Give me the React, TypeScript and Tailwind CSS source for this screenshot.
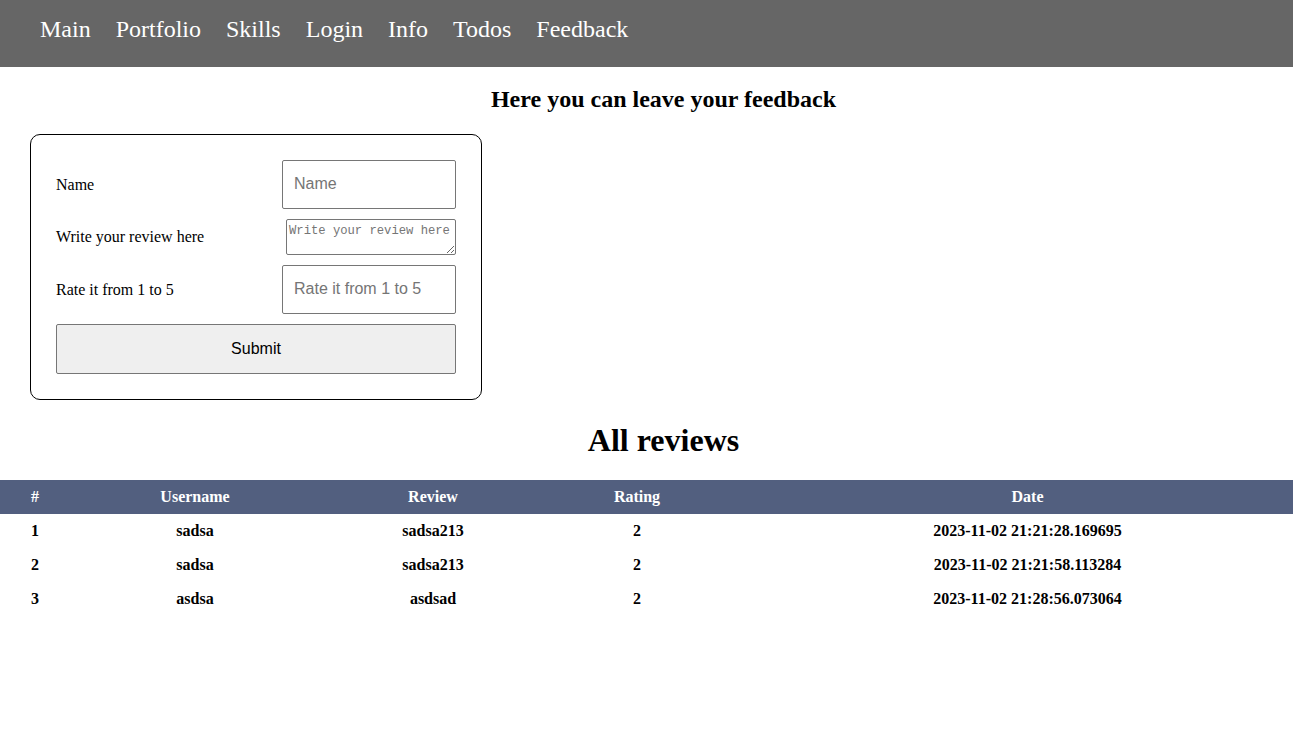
import React from 'react';

const links = ['Main', 'Portfolio', 'Skills', 'Login', 'Info', 'Todos', 'Feedback'];

const reviews = [
  { id: 1, username: 'sadsa', review: 'sadsa213', rating: 2, date: '2023-11-02 21:21:28.169695' },
  { id: 2, username: 'sadsa', review: 'sadsa213', rating: 2, date: '2023-11-02 21:21:58.113284' },
  { id: 3, username: 'asdsa', review: 'asdsad', rating: 2, date: '2023-11-02 21:28:56.073064' },
];

const serif = "font-['Liberation_Serif',_'Times_New_Roman',_serif]";

const App = () => {
  return (
    <div className={`w-full overflow-hidden bg-white text-black ${serif}`}>
      <div className="w-[1327px]">
        {/* navbar */}
        <nav className="flex h-[67px] items-start gap-[25px] bg-[#666666] pl-[40px] pt-[16px]">
          {links.map((l) => (
            <a key={l} href="#" className="text-[24px] leading-[27px] text-white">
              {l}
            </a>
          ))}
        </nav>

        <h2 className="mt-[18px] text-center text-[24px] font-bold leading-[28px]">
          Here you can leave your feedback
        </h2>

        {/* form card */}
        <form
          onSubmit={(e) => e.preventDefault()}
          className="ml-[30px] mt-[21px] flex w-[452px] flex-col gap-[10px] rounded-[10px] border border-black px-[25px] py-[25px]"
        >
          <div className="flex items-center justify-between">
            <label className="text-[16px]">Name</label>
            <input
              placeholder="Name"
              className="h-[49px] w-[174px] rounded-[2px] border border-[#767676] px-[11px] pb-[2px] font-['Liberation_Sans',_Arial,_sans-serif] text-[16px] placeholder:text-[#757575]"
            />
          </div>
          <div className="flex items-center justify-between">
            <label className="text-[16px]">Write your review here</label>
            <textarea
              placeholder="Write your review here"
              className="h-[36px] w-[170px] rounded-[2px] border border-[#767676] px-[2px] pt-[3px] font-['Liberation_Mono',_monospace] text-[12.2px] leading-[16px] placeholder:text-[#757575]"
            />
          </div>
          <div className="flex items-center justify-between">
            <label className="text-[16px]">Rate it from 1 to 5</label>
            <input
              placeholder="Rate it from 1 to 5"
              className="h-[49px] w-[174px] rounded-[2px] border border-[#767676] px-[11px] pb-[2px] font-['Liberation_Sans',_Arial,_sans-serif] text-[16px] placeholder:text-[#757575]"
            />
          </div>
          <button
            type="submit"
            className="h-[50px] w-full rounded-[2px] border border-[#767676] bg-[#efefef] font-['Liberation_Sans',_Arial,_sans-serif] text-[16px]"
          >
            Submit
          </button>
        </form>

        <h1 className="mt-[22px] text-center text-[32px] font-bold leading-[37px]">All reviews</h1>

        {/* reviews table */}
        <table className="mt-[21px] w-full table-fixed border-collapse text-[16px] font-bold">
          <colgroup>
            <col className="w-[70px]" />
            <col className="w-[250px]" />
            <col className="w-[226px]" />
            <col className="w-[182px]" />
            <col />
          </colgroup>
          <thead>
            <tr className="h-[34px] bg-[#525f7f] text-white">
              <th>#</th>
              <th>Username</th>
              <th>Review</th>
              <th>Rating</th>
              <th>Date</th>
            </tr>
          </thead>
          <tbody>
            {reviews.map((r) => (
              <tr key={r.id} className="h-[34px] text-center">
                <td>{r.id}</td>
                <td>{r.username}</td>
                <td>{r.review}</td>
                <td>{r.rating}</td>
                <td>{r.date}</td>
              </tr>
            ))}
          </tbody>
        </table>
        <div className="h-[135px]" />
      </div>
    </div>
  );
};

export default App;
